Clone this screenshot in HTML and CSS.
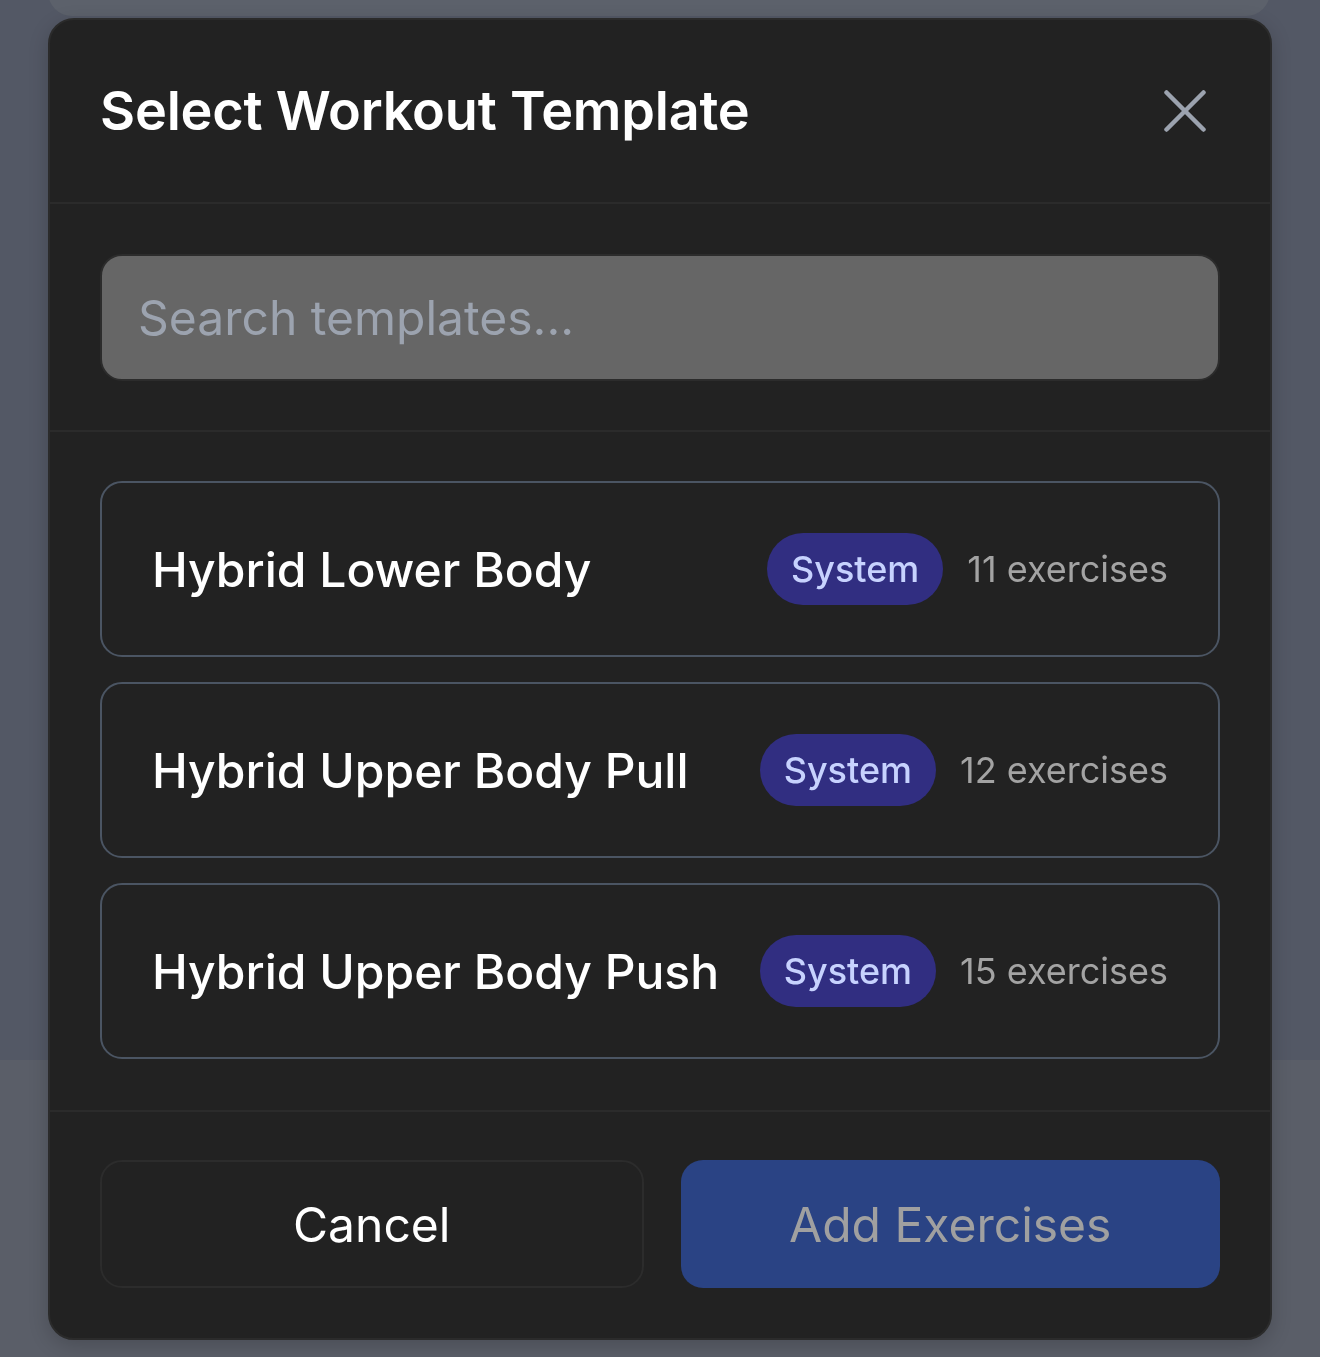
FILE: index.html
```html
<!DOCTYPE html>
<html lang="en">
<head>
<meta charset="utf-8">
<title>Select Workout Template</title>
<link rel="stylesheet" href="styles.css">
</head>
<body>
<div class="backdrop">
  <div class="bg-card"></div>
  <div class="bg-bar"></div>
</div>
<div class="overlay">
  <div class="modal">
    <div class="modal-header">
      <h2 class="modal-title">Select Workout Template</h2>
      <button class="close-btn" aria-label="Close">
        <svg width="42" height="42" viewBox="0 0 42 42" fill="none" stroke="currentColor" stroke-width="4.5" stroke-linecap="round">
          <line x1="2.5" y1="2.5" x2="39.5" y2="39.5"/>
          <line x1="39.5" y1="2.5" x2="2.5" y2="39.5"/>
        </svg>
      </button>
    </div>
    <div class="modal-search">
      <input class="search-input" type="text" placeholder="Search templates...">
    </div>
    <div class="modal-list">
      <div class="template-card">
        <span class="template-name">Hybrid Lower Body</span>
        <div class="template-meta">
          <span class="badge">System</span>
          <span class="count">11 exercises</span>
        </div>
      </div>
      <div class="template-card">
        <span class="template-name">Hybrid Upper Body Pull</span>
        <div class="template-meta">
          <span class="badge">System</span>
          <span class="count">12 exercises</span>
        </div>
      </div>
      <div class="template-card">
        <span class="template-name">Hybrid Upper Body Push</span>
        <div class="template-meta">
          <span class="badge">System</span>
          <span class="count">15 exercises</span>
        </div>
      </div>
    </div>
    <div class="modal-footer">
      <button class="btn btn-cancel">Cancel</button>
      <button class="btn btn-primary" disabled>Add Exercises</button>
    </div>
  </div>
</div>
</body>
</html>
```

FILE: styles.css
```css
* { box-sizing: border-box; }

html, body {
  margin: 0;
  padding: 0;
  width: 1320px;
  height: 1357px;
  overflow: hidden;
}

body {
  background: #535865;
  font-family: Inter, "Noto Sans", "Liberation Sans", sans-serif;
  color: #ffffff;
}

.backdrop {
  position: absolute;
  inset: 0;
  display: flex;
  flex-direction: column;
  justify-content: space-between;
}

.bg-card {
  margin: -20px 50px 0 48px;
  height: 36px;
  background: #5c616b;
  border-radius: 0 0 24px 24px;
}

.bg-bar {
  height: 297px;
  background: #5a5e68;
}

.overlay {
  position: fixed;
  inset: 0;
  padding: 18px 48px 17px 48px;
}

.modal {
  height: 1322px;
  background: #222222;
  border: 2px solid #2b2b2b;
  border-radius: 26px;
  box-shadow: 0 6px 20px rgba(0, 0, 0, 0.18);
  display: flex;
  flex-direction: column;
  overflow: hidden;
}

.modal-header {
  height: 184px;
  padding: 0 50px;
  display: flex;
  align-items: center;
  justify-content: space-between;
  border-bottom: 2px solid #2b2b2b;
}

.modal-title {
  margin: 0;
  font-size: 54px;
  font-weight: 600;
  letter-spacing: -0.2px;
  color: #ffffff;
  padding-bottom: 2px;
}

.close-btn {
  width: 70px;
  height: 70px;
  margin-right: 0;
  padding: 0;
  border: 0;
  background: transparent;
  color: #9ca3af;
  display: flex;
  align-items: center;
  justify-content: center;
}

.modal-search {
  padding: 50px 50px 49px;
  border-bottom: 2px solid #2b2b2b;
}

.search-input {
  display: block;
  width: 100%;
  height: 127px;
  padding: 0 36px;
  background: #666666;
  border: 2px solid #2c2c2c;
  border-radius: 22px;
  font-family: inherit;
  font-size: 48px;
  color: #ffffff;
  outline: none;
}

.search-input::placeholder {
  color: #9ca3af;
  opacity: 1;
}

.modal-list {
  flex: 1;
  padding: 49px 50px 50px;
  display: flex;
  flex-direction: column;
  gap: 25px;
  border-bottom: 2px solid #2b2b2b;
}

.template-card {
  height: 176px;
  padding: 0 50px;
  border: 2px solid #4b5563;
  border-radius: 22px;
  display: flex;
  align-items: center;
  justify-content: space-between;
}

.template-name {
  font-size: 48px;
  font-weight: 500;
  color: #ffffff;
}

.template-meta {
  display: flex;
  align-items: center;
  gap: 24px;
}

.badge {
  height: 72px;
  padding: 0 24px;
  border-radius: 36px;
  background: #312e81;
  color: #c7d2fe;
  font-size: 36px;
  font-weight: 500;
  display: flex;
  align-items: center;
}

.count {
  font-size: 36px;
  color: #a3a3a3;
}

.modal-footer {
  height: 226px;
  padding: 48px 50px 50px;
  display: flex;
  gap: 37px;
}

.btn {
  flex: 1;
  height: 128px;
  border-radius: 22px;
  font-family: inherit;
  font-size: 48px;
  font-weight: 400;
  display: flex;
  align-items: center;
  justify-content: center;
}

.btn-cancel {
  background: transparent;
  border: 2px solid #2c2c2c;
  color: #ffffff;
}

.btn-primary {
  background: #2a4384;
  border: 0;
  color: #a0a0a0;
}
```
